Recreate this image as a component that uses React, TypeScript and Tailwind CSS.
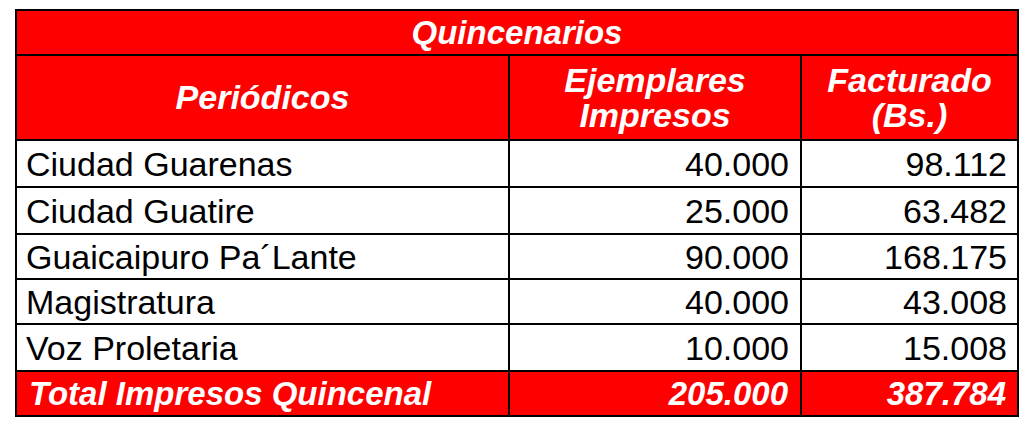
import React from "react";

const rows = [
  ["Ciudad Guarenas", "40.000", "98.112", "h-[47px]"],
  ["Ciudad Guatire", "25.000", "63.482", "h-[47px]"],
  ["Guaicaipuro Pa´Lante", "90.000", "168.175", "h-[45px]"],
  ["Magistratura", "40.000", "43.008", "h-[45px]"],
  ["Voz Proletaria", "10.000", "15.008", "h-[47px]"],
];

export default function App() {
  return (
    <div className="w-[1030px] h-[435px] bg-white pt-[9px] pl-[15px] font-['Liberation_Sans',Arial,sans-serif]">
      <table className="border-collapse border-2 border-black text-black">
        <colgroup>
          <col className="w-[493px]" />
          <col className="w-[292px]" />
          <col className="w-[217px]" />
        </colgroup>
        <tbody>
          <tr className="h-[45px] bg-[#ff0000]">
            <td colSpan={3} className="border-2 border-black text-center text-white font-bold italic text-[33px] leading-none p-0">
              Quincenarios
            </td>
          </tr>
          <tr className="h-[85px] bg-[#ff0000] text-white font-bold italic text-[34px] leading-[35px]">
            <td className="border-2 border-black text-center p-0">Periódicos</td>
            <td className="border-2 border-black text-center p-0">
              Ejemplares
              <br />
              Impresos
            </td>
            <td className="border-2 border-black text-center p-0">
              Facturado
              <br />
              (Bs.)
            </td>
          </tr>
          {rows.map(([name, a, b, h]) => (
            <tr key={name} className={`${h} text-[34px] leading-none`}>
              <td className="border-2 border-black pl-[9px] pr-2 py-0">{name}</td>
              <td className="border-2 border-black text-right pr-[11px] py-0">{a}</td>
              <td className="border-2 border-black text-right pr-[10px] py-0">{b}</td>
            </tr>
          ))}
          <tr className="h-[45px] bg-[#ff0000] text-white font-bold italic text-[33px] leading-none">
            <td className="border-2 border-black pl-[12px] py-0">Total Impresos Quincenal</td>
            <td className="border-2 border-black text-right pr-[12px] py-0">205.000</td>
            <td className="border-2 border-black text-right pr-[11px] py-0">387.784</td>
          </tr>
        </tbody>
      </table>
    </div>
  );
}
